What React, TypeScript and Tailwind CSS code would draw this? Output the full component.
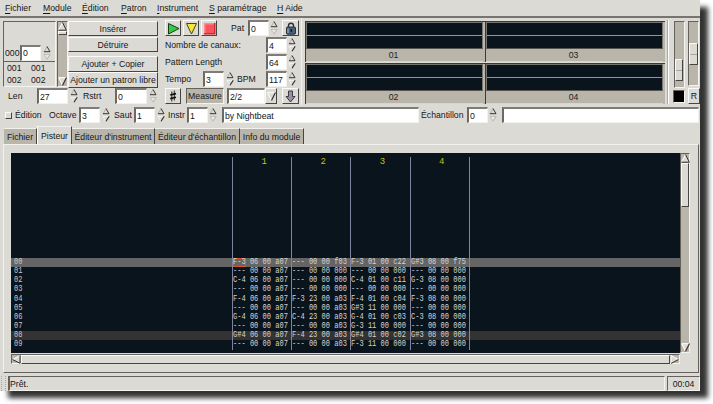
import { ReactNode } from 'react';

const SUNKEN =
  'border border-t-[#65625e] border-l-[#65625e] border-b-[#f5f3ef] border-r-[#f5f3ef]';
const RAISED =
  'border border-t-[#fbfaf8] border-l-[#fbfaf8] border-b-[#474541] border-r-[#474541]';

const menu = [
  { hot: 'F', rest: 'ichier', width: 'w-[38px]' },
  { hot: 'M', rest: 'odule', width: 'w-[39px]' },
  { hot: 'É', rest: 'dition', width: 'w-[39px]' },
  { hot: 'P', rest: 'atron', width: 'w-[36px]' },
  { hot: 'I', rest: 'nstrument', width: 'w-[52px]' },
  { hot: 'S', rest: ' paramétrage', width: 'w-[68px]' },
  { hot: 'H', rest: ' Aide', width: 'w-[40px]' },
];

const tabs = [
  { label: 'Fichier', width: 'w-[33px]' },
  { label: 'Pisteur', width: 'w-[35px]', active: true },
  { label: "Éditeur d'instrument", width: 'w-[83px]' },
  { label: "Éditeur d'échantillon", width: 'w-[85px]' },
  { label: 'Info du module', width: 'w-[64px]' },
];

const tracks = [
  [
    'F-3 06 00 a07',
    '--- 00 00 a07',
    'C-4 06 00 a07',
    '--- 00 00 a07',
    'F-4 06 00 a07',
    '--- 00 00 a07',
    'G-4 06 00 a07',
    '--- 00 00 a07',
    'G#4 06 00 a07',
    '--- 00 00 a07',
  ],
  [
    '--- 00 00 f03',
    '--- 00 00 000',
    '--- 00 00 000',
    '--- 00 00 000',
    'F-3 23 00 a03',
    '--- 00 00 a03',
    'C-4 23 00 a03',
    '--- 00 00 a03',
    'F-4 23 00 a03',
    '--- 00 00 a03',
  ],
  [
    'F-3 01 00 c22',
    '--- 00 00 000',
    'C-4 01 00 c11',
    '--- 00 00 000',
    'F-4 01 00 c04',
    'G#3 11 00 000',
    'G-4 01 00 c03',
    'G-3 11 00 000',
    'G#4 01 00 c02',
    'F-3 11 00 000',
  ],
  [
    'G#3 08 00 f75',
    '--- 00 00 000',
    'G-3 08 00 000',
    '--- 00 00 000',
    'F-3 08 00 000',
    '--- 00 00 000',
    'C-3 08 00 000',
    '--- 00 00 000',
    'G#3 08 00 000',
    '--- 00 00 000',
  ],
];

function Label({ className, children }: { className: string; children: ReactNode }) {
  return <span className={`shrink-0 whitespace-pre ${className}`}>{children}</span>;
}

function Entry({ className, children }: { className: string; children?: ReactNode }) {
  return (
    <div
      className={`flex h-4 shrink-0 items-center border-t-2 border-r border-b border-l-2 border-t-[#7e7c78] border-r-[#f3f1ed] border-b-[#f3f1ed] border-l-[#6b6965] bg-white pl-px whitespace-pre ${className}`}
    >
      {children}
    </div>
  );
}

// Up/down arrows of a spin button. The down arrow is dimmed at the minimum.
function Spin({ className, atMin }: { className?: string; atMin?: boolean }) {
  return (
    <svg viewBox="0 0 8 14" className={`h-[14px] w-2 shrink-0 ${className ?? ''}`} fill="none">
      <path d="M1 6 L4 .5 L7 6 Z" fill="#dcdad5" />
      <path d="M1 6 L4 .5" stroke="#aaa7a1" strokeWidth=".8" />
      <path d="M4 .5 L7 5.7 H1" stroke="#383733" />
      <path d="M1 8.5 H7 L4 13.2 Z" fill={atMin ? '#e9e7e2' : '#dcdad5'} />
      <path d="M7 8.5 H1 L4 13" stroke={atMin ? '#bbb8b1' : '#f7f6f3'} strokeWidth=".8" />
      <path d="M7.2 8.2 L4 13.2" stroke={atMin ? '#aaa79f' : '#2e2d2a'} strokeWidth={atMin ? 0.8 : 1.2} />
    </svg>
  );
}

function Button({ className, children }: { className: string; children: ReactNode }) {
  return (
    <button
      className={`flex shrink-0 items-center justify-center whitespace-pre bg-[#dcdad5] ${RAISED} ${className}`}
    >
      {children}
    </button>
  );
}

function ArrowUp() {
  return (
    <svg viewBox="0 0 9 9" className="h-[9px] w-[9px] shrink-0" fill="none">
      <path d="M.5 8 L4.5 .5 L8.5 8 Z" fill="#dcdad5" />
      <path d="M.5 8 L4.5 .5" stroke="#fff" />
      <path d="M4.5 .5 L8.3 8.2 H.5" stroke="#33312e" />
    </svg>
  );
}

function ArrowDown() {
  return (
    <svg viewBox="0 0 9 9" className="h-[9px] w-[9px] shrink-0" fill="none">
      <path d="M.5 .5 H8.5 L4.5 8.5 Z" fill="#dcdad5" />
      <path d="M8.5 .7 H.7 L4.5 8.5" stroke="#fff" />
      <path d="M8.5 .5 L4.5 8.5" stroke="#33312e" strokeWidth="1.2" />
    </svg>
  );
}

function PatternOrder() {
  return (
    <div className="flex h-full w-[159px] shrink-0 flex-col pt-[3px] pl-[3px]">
      <div className="flex h-[66px]">
        <div className={`flex w-[53px] flex-col pt-[22px] ${SUNKEN}`}>
          <div className="flex h-[18px] items-center border-b border-[#65625e] pl-px">
            <Label className="w-[15px]">000</Label>
            <Entry className="w-[21px]">0</Entry>
            <Spin className="ml-[2px]" atMin />
          </div>
          <div className="flex h-3 items-center pl-[3px]">
            <Label className="w-[24px]">001</Label>
            <Label className="w-[20px]">001</Label>
          </div>
          <div className="flex h-[11px] items-center pl-[3px]">
            <Label className="w-[24px]">002</Label>
            <Label className="w-[20px]">002</Label>
          </div>
        </div>
        <div className={`ml-px flex w-[11px] flex-col items-center bg-[#bab5ab] ${SUNKEN}`}>
          <ArrowUp />
          <div className={`h-1 w-[9px] bg-[#dcdad5] ${RAISED}`} />
          <div className="grow" />
          <ArrowDown />
        </div>
        <div className="flex w-[90px] shrink-0 flex-col">
          <Button className="h-[15px]">Insérer</Button>
          <Button className="mt-px h-[15px]">Détruire</Button>
          <Button className="mt-[4px] h-[16px]">Ajouter + Copier</Button>
          <Button className="h-[16px]">Ajouter un patron libre</Button>
        </div>
      </div>
      <div className="mt-px flex h-4 items-center pl-[5px]">
        <Label className="w-[29px]">Len</Label>
        <Entry className="w-[31px]">27</Entry>
        <Spin className="ml-[2px]" />
        <Label className="ml-[5px] w-[32px]">Rstrt</Label>
        <Entry className="w-[32px]">0</Entry>
        <Spin className="ml-[2px]" atMin />
      </div>
    </div>
  );
}

function Transport() {
  return (
    <div className="flex h-full w-[140px] shrink-0 flex-col pt-[2px] pl-[6px]">
      <div className="flex h-4 items-center">
        <Button className="h-4 w-4">
          <svg viewBox="0 0 13 13" className="h-[13px] w-[13px]">
            <path d="M1.5 1.5 L12 6.5 L1.5 12 Z" fill="#35c94a" stroke="#123d16" />
          </svg>
        </Button>
        <Button className="ml-[2px] h-4 w-4">
          <svg viewBox="0 0 13 13" className="h-[13px] w-[13px]">
            <path d="M1.5 1.5 H11.5 L6.5 12 Z" fill="#f3e63c" stroke="#4b4710" />
          </svg>
        </Button>
        <Button className="ml-[2px] h-4 w-4">
          <svg viewBox="0 0 13 13" className="h-[13px] w-[13px]">
            <rect x="1" y="1" width="11.5" height="11.5" fill="#c72a38" />
            <rect x="1" y="1" width="10" height="10" fill="#ff8b90" />
            <rect x="2.5" y="2.5" width="8.5" height="8.5" fill="#f9535c" />
          </svg>
        </Button>
        <Label className="ml-[14px] w-[17px]">Pat</Label>
        <Entry className="w-[21px]">0</Entry>
        <Spin className="ml-px" atMin />
        <Button className="ml-[4px] h-4 w-[17px]">
          <svg viewBox="0 0 12 13" className="h-[13px] w-3" fill="none">
            <path d="M3.5 6 V3.5 Q3.5 1.3 6 1.3 T8.5 3.5 V6" stroke="#2b3036" strokeWidth="1.4" />
            <rect x="1.5" y="5" width="9" height="7.2" rx="1" fill="#46627c" stroke="#26313c" />
            <path d="M3 6.5 V11" stroke="#a6c0d4" />
            <path d="M6.3 7 V10" stroke="#10161c" strokeWidth="1.4" />
          </svg>
        </Button>
      </div>
      <div className="mt-px flex h-4 items-center">
        <Label className="w-[101px]">Nombre de canaux:</Label>
        <Entry className="w-[21px]">4</Entry>
        <Spin className="ml-px" />
      </div>
      <div className="mt-px flex h-4 items-center">
        <Label className="w-[101px]">Pattern Length</Label>
        <Entry className="w-[21px]">64</Entry>
        <Spin className="ml-px" />
      </div>
      <div className="mt-px flex h-4 items-center">
        <Label className="w-[38px]">Tempo</Label>
        <Entry className="w-[21px]">3</Entry>
        <Spin className="ml-[2px]" />
        <Label className="ml-[3px] w-[29px]">BPM</Label>
        <Entry className="w-[21px]">117</Entry>
        <Spin className="ml-px" />
      </div>
      <div className="mt-px flex h-4 items-center">
        <Button className="h-4 w-4">
          <svg viewBox="0 0 8 12" className="h-3 w-2" stroke="#111" fill="none">
            <path d="M2.8 1.5 V11.5 M5.3 .5 V10.5" strokeWidth=".9" />
            <path d="M1.2 5 L7 3.6 M1.2 8.6 L7 7.2" strokeWidth="1.6" />
          </svg>
        </Button>
        <div className={`ml-[5px] flex h-4 w-[38px] items-center justify-center bg-[#bab5ab] ${SUNKEN}`}>
          Measure
        </div>
        <Entry className="ml-[3px] w-[38px]">2/2</Entry>
        <Button className="h-4 w-3">
          <ArrowDown />
        </Button>
        <Button className="ml-[5px] h-4 w-[17px]">
          <svg viewBox="0 0 11 13" className="h-[13px] w-[11px]">
            <path
              d="M3.5 1 H7.5 V6.5 H10 L5.5 12 L1 6.5 H3.5 Z"
              fill="#9c8ea6"
              stroke="#332e38"
              strokeWidth=".9"
            />
          </svg>
        </Button>
      </div>
    </div>
  );
}

function Scope({ channel }: { channel: string }) {
  return (
    <div className="flex h-[41px] flex-col border-t border-l border-[#3b3935] bg-[#bab5ab] pr-[2px]">
      <div className="flex h-[27px] flex-col justify-center border border-[#77756f] border-b-[#55544f] bg-[#0a141d]">
        <div className="h-px bg-[#8f979b]" />
      </div>
      <div className="flex h-[12px] items-center justify-center pr-[2px] text-[#222]">{channel}</div>
      <div className="h-px bg-[#d8d5cd]" />
    </div>
  );
}

function Toolbar() {
  return (
    <div className="flex h-[87px]">
      <PatternOrder />
      <Transport />
      <div className="mx-[2px] w-px shrink-0 bg-[#f3f1ed]" />
      <div className="mt-[3px] ml-px grid h-[83px] w-[360px] shrink-0 grid-cols-2 gap-y-px">
        <Scope channel="01" />
        <Scope channel="03" />
        <Scope channel="02" />
        <Scope channel="04" />
      </div>
      <div className="mt-[2px] ml-[2px] h-[84px] w-[2px] shrink-0 border-r border-l border-r-white border-l-[#aaa7a0]" />
      <div className="mt-[3px] ml-[4px] flex w-3 shrink-0 flex-col">
        <div className={`ml-px flex h-[67px] w-[11px] flex-col justify-end bg-[#bab5ab] pb-[6px] ${SUNKEN}`}>
          <div className={`flex h-[22px] w-[8px] items-center bg-[#dcdad5] ${RAISED}`}>
            <div className="h-px w-full bg-[#aaa7a0]" />
          </div>
        </div>
        <div className={`mt-[2px] h-[13px] bg-black ${SUNKEN}`} />
      </div>
      <div className="mt-[3px] ml-[3px] flex w-[12px] shrink-0 flex-col">
        <div className={`flex h-[65px] w-[11px] flex-col bg-[#bab5ab] pt-[21px] ${SUNKEN}`}>
          <div className={`flex h-[22px] w-[9px] items-center bg-[#dcdad5] ${RAISED}`}>
            <div className="h-px w-full bg-[#aaa7a0]" />
          </div>
        </div>
        <Button className="mt-[2px] h-4 w-[12px]">R</Button>
      </div>
    </div>
  );
}

function EditBar() {
  return (
    <div className="mt-[2px] flex h-4 items-center pl-[5px]">
      <div className={`mt-px h-[7px] w-[7px] shrink-0 bg-[#dcdad5] ${RAISED}`} />
      <Label className="ml-[3px] w-[34px]">Édition</Label>
      <Label className="w-[30px]">Octave</Label>
      <Entry className="w-[21px]">3</Entry>
      <Spin className="ml-[2px]" />
      <Label className="ml-[4px] w-[20px]">Saut</Label>
      <Entry className="w-[21px]">1</Entry>
      <Spin className="ml-[2px]" />
      <Label className="ml-[3px] w-[19px]">Instr</Label>
      <Entry className="w-[21px]">1</Entry>
      <Spin className="ml-px" atMin />
      <Entry className="ml-[5px] w-[197px]">by Nightbeat</Entry>
      <Label className="ml-[2px] w-[46px]">Échantillon</Label>
      <Entry className="w-[21px]">0</Entry>
      <Spin className="ml-px" atMin />
      <Entry className="ml-[5px] w-[197px]" />
    </div>
  );
}

function Track({ index, notes }: { index: number; notes: string[] }) {
  return (
    <div className="flex w-[59.2px] shrink-0 flex-col border-l border-[#7f83a0]">
      <div className="h-[101px] pt-px pl-[4px] text-center font-['Liberation_Mono'] text-[9px] leading-[9px] text-[#c9bd12]">
        {index}
      </div>
      {notes.map((note, row) => (
        <div key={row} className="relative flex h-[9.15px] items-center">
          {index === 1 && row === 0 && (
            <div className="absolute top-0 left-0 h-[9px] w-[13px] border border-[#e0502c]" />
          )}
          <span className="origin-left scale-x-[0.828] font-['Liberation_Mono'] text-[8.5px] leading-[9px] whitespace-pre text-[#d3d4d3]">
            {note}
          </span>
        </div>
      ))}
    </div>
  );
}

function Tracker() {
  return (
    <div className="flex h-[200px]">
      <div className="relative w-[669px] shrink-0 overflow-hidden bg-[#0a141d]">
        {/* current row and highlighted row */}
        <div className="absolute top-[105px] h-[9px] w-full bg-[#656565]" />
        <div className="absolute top-[178px] h-[9px] w-full bg-[#333]" />
        <div className="relative flex h-[197px] pt-[4px]">
          <div className="w-[221px] shrink-0 pt-[101px] pl-[3px]">
            {tracks[0].map((_, row) => (
              <div key={row} className="flex h-[9.15px] items-center">
                <span className="origin-left scale-x-[0.828] font-['Liberation_Mono'] text-[8.5px] leading-[9px] text-[#c5c8c9]">
                  {String(row).padStart(2, '0')}
                </span>
              </div>
            ))}
          </div>
          {tracks.map((notes, i) => (
            <Track key={i} index={i + 1} notes={notes} />
          ))}
          <div className="w-px shrink-0 bg-[#7f83a0]" />
        </div>
      </div>
      <div className={`flex w-[10px] flex-col bg-[#bab5ab] ${SUNKEN}`}>
        <ArrowUp />
        <div className={`h-[44px] w-[8px] bg-[#dcdad5] ${RAISED}`} />
        <div className="grow" />
        <ArrowDown />
      </div>
    </div>
  );
}

export default function App() {
  return (
    <div className="h-[404px] w-[713px] overflow-hidden bg-white font-['Liberation_Sans',sans-serif] text-[8.7px] leading-[10px] text-[#161616]">
      <div className="flex h-[391px] w-[700px] flex-col bg-[#dcdad5] shadow-[8px_7px_5px_#333]">
        <nav className="flex h-[18px] shrink-0 items-center border-b-2 border-[#77746f] pl-[5px]">
          {menu.map((item) => (
            <div key={item.hot} className={`shrink-0 whitespace-pre ${item.width}`}>
              <span className="underline underline-offset-2">{item.hot}</span>
              {item.rest}
            </div>
          ))}
        </nav>

        <Toolbar />
        <EditBar />

        <div className="mt-[3px] flex h-[18px] items-end pl-[4px]">
          {tabs.map((tab) => (
            <div
              key={tab.label}
              className={`flex shrink-0 items-center justify-center border-t border-r border-t-[#f3f1ed] border-r-[#474541] whitespace-pre ${tab.width} ${
                tab.active ? 'h-[18px] border-l border-l-white bg-[#dcdad5]' : 'h-4 bg-[#bab5ab]'
              }`}
            >
              {tab.label}
            </div>
          ))}
        </div>

        <div className="ml-[3px] h-[229px] w-[696px] shrink-0 border border-t-[#f3f1ed] border-r-[#65625e] border-b-[#65625e] border-l-[#f3f1ed] pt-[8px] pl-[7px]">
          <Tracker />
          <div className={`mt-px flex h-[10px] w-[669px] items-center bg-[#bab5ab] ${SUNKEN}`}>
            <svg viewBox="0 0 9 9" className="h-[9px] w-[9px] shrink-0" fill="none">
              <path d="M8 .5 L.5 4.5 L8 8.5 Z" fill="#dcdad5" />
              <path d="M8 .5 L.5 4.5" stroke="#fff" />
              <path d="M.5 4.5 L8 8.3 V.5" stroke="#33312e" />
            </svg>
            <div className={`h-[9px] grow bg-[#dcdad5] ${RAISED}`} />
            <svg viewBox="0 0 9 9" className="h-[9px] w-[9px] shrink-0" fill="none">
              <path d="M1 .5 L8.5 4.5 L1 8.5 Z" fill="#dcdad5" />
              <path d="M8.5 4.5 L1 .5 V8.5" stroke="#fff" />
              <path d="M1 8.5 L8.5 4.5" stroke="#33312e" />
            </svg>
          </div>
        </div>

        <div className="mt-[3px] flex h-[15px] shrink-0 pl-px">
          <div className="w-[5px] border-r border-dotted border-[#aaa7a0] border-l" />
          <div className={`ml-[2px] flex w-[657px] items-center border-l-2 ${SUNKEN}`}>Prêt.</div>
          <div className={`ml-[2px] flex w-[33px] items-center justify-center ${SUNKEN}`}>00:04</div>
        </div>
      </div>
    </div>
  );
}
